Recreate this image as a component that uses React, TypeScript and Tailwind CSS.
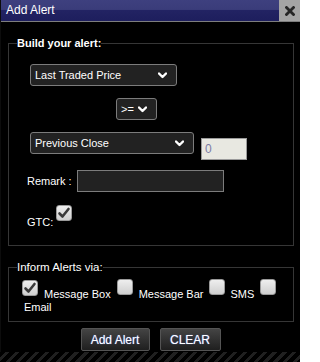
import React from "react";

const font = { fontFamily: '"Liberation Sans", Arial, sans-serif' };

function Chevron() {
  return (
    <svg width="9" height="7" viewBox="0 0 9 7" className="shrink-0">
      <path d="M1 1.5 L4.5 5 L8 1.5" fill="none" stroke="#ffffff" strokeWidth="2.4" strokeLinecap="round" strokeLinejoin="round" />
    </svg>
  );
}

function Check({ checked }: { checked?: boolean }) {
  return (
    <span className="inline-flex w-[16px] h-[16px] shrink-0 items-center justify-center rounded-[3px] border border-[#9a9a9a] bg-[linear-gradient(to_bottom,#eeeeee,#cfcfcf)]">
      {checked && (
        <svg width="14" height="14" viewBox="0 0 14 14">
          <path d="M2.5 7.5 L5.5 10.5 L11.5 3" fill="none" stroke="#3a3a3a" strokeWidth="2.6" strokeLinecap="round" strokeLinejoin="round" />
        </svg>
      )}
    </span>
  );
}

function FakeSelect({ label, className }: { label: string; className: string }) {
  return (
    <div className={`flex items-center justify-between h-[22px] rounded-[3px] border border-[#7c7c7c] bg-[#222222] pl-[4px] pr-[9px] text-[11px] text-white ${className}`}>
      <span>{label}</span>
      <Chevron />
    </div>
  );
}

export default function App() {
  return (
    <div className="w-[300px] h-[362px] bg-black overflow-hidden flex flex-col" style={font}>
      <div className="flex h-[352px]">
        {/* page behind the dialog */}
        <div className="w-px bg-[#0c0c0c]" />
        <div className="flex-1 flex flex-col bg-black">
          {/* title bar */}
          <div className="flex h-[21px]">
            <div className="flex-1 pl-[5px] text-[12px] leading-[21px] text-white bg-[linear-gradient(to_bottom,#3e407f_0%,#3a3c7a_45%,#222363_50%,#1d1e5d_100%)]">
              Add Alert
            </div>
            <div className="w-[21px] flex items-center justify-center bg-[#a4a4a4]">
              <svg width="10" height="10" viewBox="0 0 10 10">
                <path d="M1.5 1.5 L8.5 8.5 M8.5 1.5 L1.5 8.5" stroke="#262626" strokeWidth="2.8" strokeLinecap="square" />
              </svg>
            </div>
          </div>
          <div className="h-px bg-[#7d7d7d]" />

          {/* build your alert */}
          <fieldset className="mt-[14px] ml-[7px] w-[286px] border border-[#363636] pl-[8px] pt-[14px] pb-[16px]">
            <legend className="text-[11px] leading-[14px] font-bold text-white">Build your alert:</legend>
            <FakeSelect label="Last Traded Price" className="ml-[13px] w-[147px]" />
            <FakeSelect label=">=" className="mt-[12px] ml-[99px] w-[41px]" />
            <div className="mt-[12px] ml-[13px] flex items-start">
              <FakeSelect label="Previous Close" className="w-[164px]" />
              <div className="ml-[7px] mt-[6px] w-[46px] h-[22px] border border-[#9a9a9a] bg-[#e8e8e1] pl-[3px] text-[12px] leading-[20px] text-[#7c7ca4]">
                0
              </div>
            </div>
            <div className="mt-[10px] ml-[10px] flex items-center">
              <span className="text-[11px] text-white">Remark :</span>
              <div className="ml-[5px] w-[147px] h-[22px] border border-[#7c7c7c] bg-[#222222]" />
            </div>
            <div className="mt-[11px] ml-[10px] flex items-end">
              <span className="text-[11px] leading-[13px] text-white">GTC:</span>
              <span className="ml-[3px] mb-[2px]">
                <Check checked />
              </span>
            </div>
          </fieldset>

          {/* inform alerts via */}
          <fieldset className="mt-[14px] ml-[7px] w-[286px] border border-[#363636] pl-[8px] pt-[5px] pb-[7px]">
            <legend className="text-[11.5px] leading-[14px] text-white">Inform Alerts via:</legend>
            <div className="ml-[2px] flex flex-wrap items-end text-[11px] leading-[13px] text-white">
              <span className="ml-[3px] mb-[3px]"><Check checked /></span>
              <span className="ml-[6px]">Message Box</span>
              <span className="ml-[6px] mb-[3px]"><Check /></span>
              <span className="ml-[6px]">Message Bar</span>
              <span className="ml-[6px] mb-[3px]"><Check /></span>
              <span className="ml-[5px]">SMS</span>
              <span className="ml-[6px] mb-[3px]"><Check /></span>
              <span className="ml-[5px]">Email</span>
            </div>
          </fieldset>

          {/* buttons */}
          <div className="mt-[6px] flex justify-center gap-[10px]">
            <button className="w-[69px] h-[23px] rounded-[2px] border border-[#545454] bg-[linear-gradient(to_bottom,#444444,#1f1f1f)] text-[12px] text-white [text-shadow:0_0_1px_#6b8cff]">
              Add Alert
            </button>
            <button className="w-[61px] h-[23px] rounded-[2px] border border-[#545454] bg-[linear-gradient(to_bottom,#444444,#1f1f1f)] text-[12px] text-white [text-shadow:0_0_1px_#6b8cff]">
              CLEAR
            </button>
          </div>
        </div>
      </div>
      {/* striped page background */}
      <div className="h-[10px] bg-[repeating-linear-gradient(135deg,#000000_0px,#000000_4px,#202020_4px,#202020_7px)]" />
    </div>
  );
}
